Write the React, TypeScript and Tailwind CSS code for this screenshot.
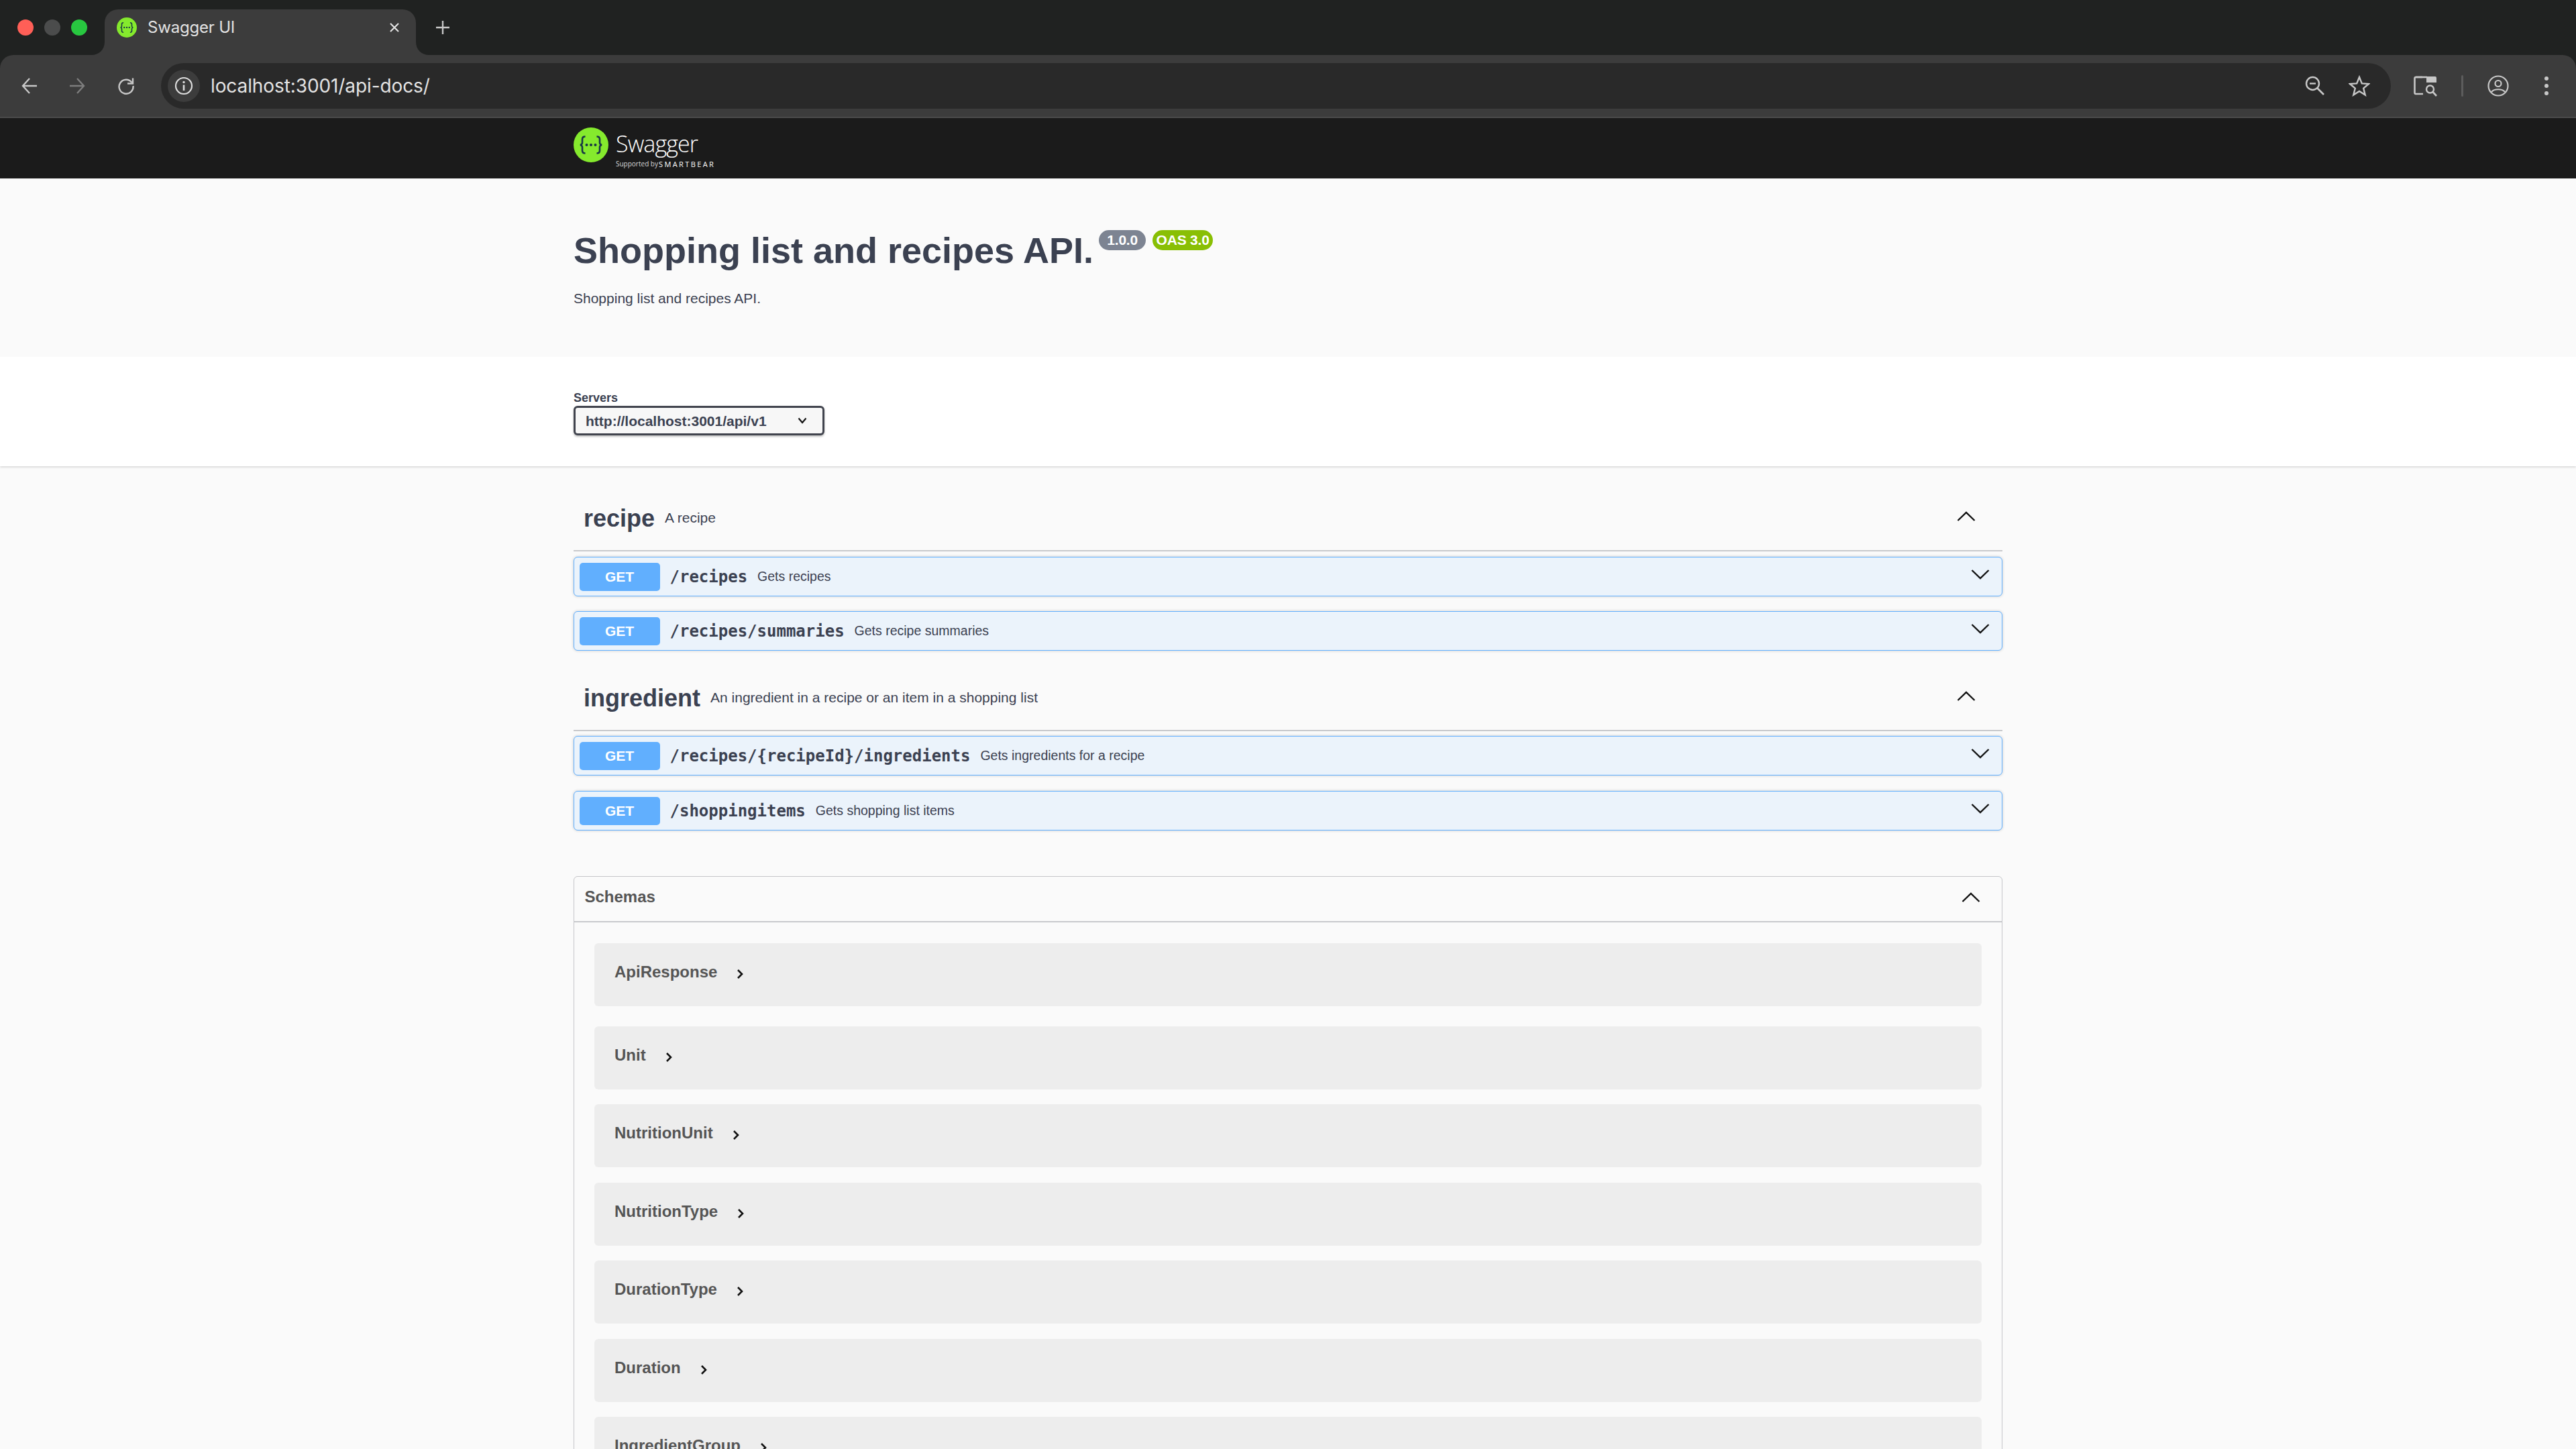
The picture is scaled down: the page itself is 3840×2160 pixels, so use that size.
import React from "react";

const ChevronDown = () => (
  <svg width="28" height="16" viewBox="0 0 28 16" fill="none" className="shrink-0">
    <path d="M1.5 2 L14 14 L26.5 2" stroke="#111" strokeWidth="2.4" />
  </svg>
);
const ChevronUp = () => (
  <svg width="28" height="16" viewBox="0 0 28 16" fill="none" className="shrink-0">
    <path d="M1.5 14 L14 2 L26.5 14" stroke="#111" strokeWidth="2.4" />
  </svg>
);
const SwaggerMark = ({ size, dark }: { size: number; dark: string }) => (
  <svg width={size} height={size} viewBox="0 0 52 52" className="shrink-0">
    <circle cx="26" cy="26" r="26" fill="#85ea2d" />
    <path d="M17.5 13.5 c-3 0 -4.5 1.5 -4.5 4 v5 c0 2 -1 3 -3 3.5 c2 .5 3 1.5 3 3.5 v5 c0 2.5 1.5 4 4.5 4" stroke={dark} strokeWidth="2.6" fill="none" />
    <path d="M34.5 13.5 c3 0 4.5 1.5 4.5 4 v5 c0 2 1 3 3 3.5 c-2 .5 -3 1.5 -3 3.5 v5 c0 2.5 -1.5 4 -4.5 4" stroke={dark} strokeWidth="2.6" fill="none" />
    <circle cx="19.5" cy="26" r="2" fill={dark} />
    <circle cx="26" cy="26" r="2" fill={dark} />
    <circle cx="32.5" cy="26" r="2" fill={dark} />
  </svg>
);

const TabStrip = () => (
  <div className="h-[82px] bg-[#202221] flex items-end shrink-0">
    <div className="w-[156px] h-[82px] flex items-center pl-[26px] gap-[16px] pb-0">
      <span className="w-[24px] h-[24px] rounded-full bg-[#ff5f57]" />
      <span className="w-[24px] h-[24px] rounded-full bg-[#4b4c4c]" />
      <span className="w-[24px] h-[24px] rounded-full bg-[#28c840]" />
    </div>
    <div className="relative w-[464px] h-[68px] bg-[#3c3c3c] rounded-t-[20px] flex items-center pl-[18px] pr-[24px] pb-[14px] text-[#e3e3e3] font-['Inter',sans-serif] text-[24px]">
      <svg width="20" height="20" viewBox="0 0 20 20" className="absolute left-[-20px] bottom-0">
        <path d="M20 0 V20 H0 C12 20 20 12 20 0 Z" fill="#3c3c3c" />
      </svg>
      <svg width="20" height="20" viewBox="0 0 20 20" className="absolute right-[-20px] bottom-0">
        <path d="M0 0 V20 H20 C8 20 0 12 0 0 Z" fill="#3c3c3c" />
      </svg>
      <SwaggerMark size={30} dark="#173646" />
      <span className="ml-[16px] flex-1 tracking-[-0.2px]">Swagger UI</span>
      <svg width="16" height="16" viewBox="0 0 16 16" fill="none">
        <path d="M2 2 L14 14 M14 2 L2 14" stroke="#e3e3e3" strokeWidth="2.2" />
      </svg>
    </div>
    <div className="h-[82px] flex items-center pl-[29px]">
      <svg width="22" height="22" viewBox="0 0 22 22" fill="none">
        <path d="M11 1 V21 M1 11 H21" stroke="#c7c7c7" strokeWidth="2.4" />
      </svg>
    </div>
  </div>
);

const Toolbar = () => (
  <div className="h-[94px] bg-[#3c3c3c] rounded-t-[20px] border-b-2 border-[#4b4b4b] bg-clip-padding flex items-center shrink-0">
    <div className="w-[240px] flex items-center pl-[32px] shrink-0">
      <svg width="24" height="26" viewBox="0 0 24 26" fill="none">
        <path d="M12 2 L2 13 L12 24 M2 13 H23" stroke="#c7c7c7" strokeWidth="2.4" />
      </svg>
      <svg width="24" height="26" viewBox="0 0 24 26" fill="none" className="ml-[47px]">
        <path d="M12 2 L22 13 L12 24 M22 13 H1" stroke="#7d7d7d" strokeWidth="2.4" />
      </svg>
      <svg width="26" height="26" viewBox="0 0 26 26" fill="none" className="ml-[48px]">
        <path d="M21.5 8 A10.5 10.5 0 1 0 23.5 13" stroke="#c7c7c7" strokeWidth="2.4" />
        <path d="M23 1.5 V9.5 H15" stroke="#c7c7c7" strokeWidth="2.4" />
      </svg>
    </div>
    <div className="flex-1 h-[68px] rounded-full bg-[#292929] flex items-center pl-[10px] pr-[31px]">
      <div className="w-[48px] h-[48px] rounded-full bg-[#3c3c3c] flex items-center justify-center shrink-0">
        <svg width="28" height="28" viewBox="0 0 28 28" fill="none">
          <circle cx="14" cy="14" r="12" stroke="#dcdcdc" strokeWidth="2.2" />
          <path d="M14 12.5 V21" stroke="#dcdcdc" strokeWidth="2.6" />
          <circle cx="14" cy="8.5" r="1.7" fill="#dcdcdc" />
        </svg>
      </div>
      <span className="ml-[16px] flex-1 text-[#e3e3e3] text-[28px] font-['Inter',sans-serif] tracking-[-0.1px]">localhost:3001/api-docs/</span>
      <svg width="30" height="30" viewBox="0 0 30 30" fill="none">
        <circle cx="11.5" cy="11.5" r="9.5" stroke="#c7c7c7" strokeWidth="2.4" />
        <path d="M18.5 18.5 L28 28" stroke="#c7c7c7" strokeWidth="2.6" />
        <path d="M7 11.5 H16" stroke="#c7c7c7" strokeWidth="2.4" />
      </svg>
      <svg width="32" height="32" viewBox="0 0 32 32" fill="none" className="ml-[35px]">
        <path d="M16 3 L19.8 12.4 L30 13 L22.2 19.6 L24.7 29.5 L16 24 L7.3 29.5 L9.8 19.6 L2 13 L12.2 12.4 Z" stroke="#c7c7c7" strokeWidth="2.4" strokeLinejoin="miter" />
      </svg>
    </div>
    <div className="w-[276px] shrink-0 flex items-center pl-[34px]">
      <svg width="36" height="32" viewBox="0 0 36 32" fill="none">
        <path d="M13 3 H3 a1.5 1.5 0 0 0 -1.5 1.5 V26.5 a1.5 1.5 0 0 0 1.5 1.5 H14" stroke="#c7c7c7" strokeWidth="2.6" />
        <path d="M3 3 H20" stroke="#c7c7c7" strokeWidth="2.6" />
        <path d="M19 2 H32 a2 2 0 0 1 2 2 V11 H19 Z" fill="#c7c7c7" />
        <circle cx="24.5" cy="21" r="5.5" stroke="#c7c7c7" strokeWidth="2.4" />
        <path d="M28.5 25 L34 31" stroke="#c7c7c7" strokeWidth="2.6" />
      </svg>
      <span className="ml-[35px] w-[3px] h-[32px] rounded-full bg-[#5c5c5c]" />
      <svg width="32" height="32" viewBox="0 0 32 32" fill="none" className="ml-[36px]">
        <circle cx="16" cy="16" r="14.5" stroke="#c7c7c7" strokeWidth="2.2" />
        <circle cx="16" cy="12.5" r="4.5" stroke="#c7c7c7" strokeWidth="2.2" />
        <path d="M6 25 C10 20 22 20 26 25" stroke="#c7c7c7" strokeWidth="2.2" />
      </svg>
      <div className="ml-[53px] flex flex-col gap-[5px]">
        <span className="w-[6px] h-[6px] rounded-full bg-[#c7c7c7]" />
        <span className="w-[6px] h-[6px] rounded-full bg-[#c7c7c7]" />
        <span className="w-[6px] h-[6px] rounded-full bg-[#c7c7c7]" />
      </div>
    </div>
  </div>
);

const Topbar = () => (
  <div className="h-[90px] bg-[#1b1b1b] pl-[855px] pb-[10px] flex items-center shrink-0">
    <SwaggerMark size={52} dark="#173646" />
    <div className="ml-[11px] mt-[13px] flex flex-col text-white font-['Open_Sans',sans-serif]">
      <span className="text-[34px] leading-[38px] tracking-[-0.9px] font-light">Swagger</span>
      <span className="flex items-center text-[#d8d8d8] text-[10px] leading-[11px] mt-[6px]">
        <span className="w-[64px]">Supported by</span>
        <span className="text-white text-[11px] tracking-[2.4px]">SMARTBEAR</span>
      </span>
    </div>
  </div>
);

const Badge = ({ label, w, bg, ml }: { label: string; w: string; bg: string; ml: string }) => (
  <span className={`${ml} ${w} ${bg} mt-[5px] h-[30px] rounded-full text-white text-[21px] font-bold flex items-center justify-center pb-[1px] tracking-[-0.2px]`}>
    {label}
  </span>
);

const Info = () => (
  <div className="h-[266px] bg-[#fafafa] pl-[855px] pt-[72px] shrink-0 text-[#3b4151]">
    <div className="flex items-start">
      <h2 className="text-[54px] leading-[70px] font-bold">Shopping list and recipes API.</h2>
      <Badge label="1.0.0" w="w-[70px]" bg="bg-[#7d8492]" ml="ml-[8px]" />
      <Badge label="OAS 3.0" w="w-[90px]" bg="bg-[#89bf04]" ml="ml-[10px]" />
    </div>
    <p className="mt-[22px] text-[21px] leading-[30px]">Shopping list and recipes API.</p>
  </div>
);

const Servers = () => (
  <div className="h-[163px] bg-white shadow-[0_1.5px_3px_rgba(0,0,0,0.15)] pl-[855px] pt-[49px] shrink-0 relative text-[#3b4151]">
    <div className="text-[18px] leading-[24px] font-bold">Servers</div>
    <div className="w-[374px] h-[44px] border-[3px] border-[#41444e] rounded-[6px] bg-[#f7f7f7] shadow-[0_1.5px_3px_rgba(0,0,0,0.25)] flex items-center pl-[15px] pr-[23px]">
      <span className="flex-1 text-[21px] font-bold pt-[1px]">http://localhost:3001/api/v1</span>
      <svg width="14" height="10" viewBox="0 0 14 10" fill="none">
        <path d="M1.5 1.5 L7 8 L12.5 1.5" stroke="#111" strokeWidth="2.2" />
      </svg>
    </div>
  </div>
);

const Op = ({ path, summary, mt }: { path: string; summary: string; mt: string }) => (
  <div className={`${mt} h-[59px] rounded-[6px] border-[1.5px] border-[#61affe] bg-[#ebf3fb] shadow-[0_0_4px_rgba(0,0,0,0.19)] flex items-center pl-[7.5px] pr-[18px]`}>
    <span className="w-[120px] h-[42px] rounded-[5px] bg-[#61affe] text-white text-[21px] font-bold flex items-center justify-center shrink-0">GET</span>
    <span className="ml-[15px] text-[24px] font-bold font-['DejaVu_Sans_Mono',monospace]">{path}</span>
    <span className="ml-[15px] flex-1 text-[19.5px]">{summary}</span>
    <div className="mb-[7px]"><ChevronDown /></div>
  </div>
);

const Tag = ({ name, desc, h }: { name: string; desc: string; h: string }) => (
  <div className={`${h} border-b-2 border-[#c8c9cc] flex items-end pl-[15px] pr-[40px] pb-[22px]`}>
    <span className="text-[36px] leading-[50px] font-bold">{name}</span>
    <span className="ml-[15px] flex-1 text-[21px] leading-[30px] mb-[11px]">{desc}</span>
    <div className="mb-[20px]"><ChevronUp /></div>
  </div>
);

const rows = [
  { n: "ApiResponse", mt: "mt-[31px]" },
  { n: "Unit", mt: "mt-[30px]" },
  { n: "NutritionUnit", mt: "mt-[22px]" },
  { n: "NutritionType", mt: "mt-[23px]" },
  { n: "DurationType", mt: "mt-[22px]" },
  { n: "Duration", mt: "mt-[23px]" },
  { n: "IngredientGroup", mt: "mt-[22px]" },
];

const Schemas = () => (
  <div className="mt-[68px] border-[1.5px] border-[#c5c6c9] rounded-[6px] pb-[40px]">
    <div className="h-[68px] border-b-2 border-[#c8c9cc] flex items-center pl-[15.5px] pr-[32px]">
      <span className="flex-1 text-[24px] font-bold text-[#555555] mb-[6px]">Schemas</span>
      <div className="mb-[4px]"><ChevronUp /></div>
    </div>
    <div className="pl-[30px] pr-[30px]">
      {rows.map((r) => (
        <div key={r.n} className={`${r.mt} h-[94px] rounded-[6px] bg-[#ededed] flex items-center pl-[30px] gap-[29px]`}>
          <span className="text-[24px] font-bold text-[#555555] mb-[8px]">{r.n}</span>
          <svg width="10" height="16" viewBox="0 0 10 16" fill="none" className="mb-[3px]">
            <path d="M2 2 L8 8 L2 14" stroke="#111" strokeWidth="2.6" />
          </svg>
        </div>
      ))}
    </div>
  </div>
);

export default function App() {
  return (
    <div className="w-[3840px] h-[2160px] overflow-hidden flex flex-col bg-[#fafafa] font-['Liberation_Sans',sans-serif]">
      <TabStrip />
      <div className="bg-[#202221] shrink-0"><Toolbar /></div>
      <Topbar />
      <Info />
      <Servers />
      <div className="w-[2130px] ml-[855px] pt-[43px] text-[#3b4151]">
        <Tag name="recipe" desc="A recipe" h="h-[84px]" />
        <Op path="/recipes" summary="Gets recipes" mt="mt-[8px]" />
        <Op path="/recipes/summaries" summary="Gets recipe summaries" mt="mt-[22px]" />
        <Tag name="ingredient" desc="An ingredient in a recipe or an item in a shopping list" h="h-[120px]" />
        <Op path="/recipes/{recipeId}/ingredients" summary="Gets ingredients for a recipe" mt="mt-[7px]" />
        <Op path="/shoppingitems" summary="Gets shopping list items" mt="mt-[23px]" />
        <Schemas />
      </div>
    </div>
  );
}
